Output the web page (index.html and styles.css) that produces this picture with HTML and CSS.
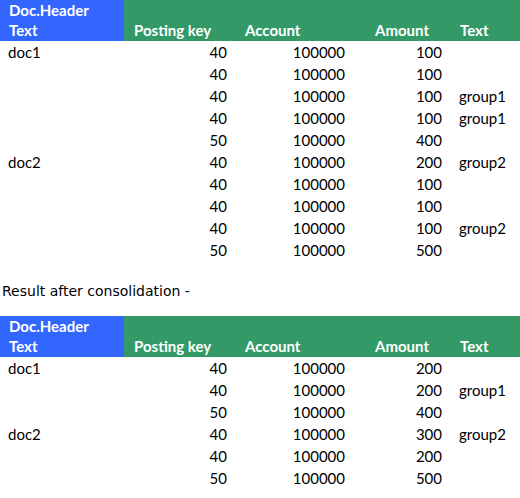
FILE: index.html
```html
<!DOCTYPE html>
<html>
<head>
<meta charset="utf-8">
<link rel="stylesheet" href="styles.css">
</head>
<body>
<div class="sheet">
  <div class="grid">
    <div class="h h1">Doc.Header<br>Text</div>
    <div class="h h2">Posting key</div>
    <div class="h h3">Account</div>
    <div class="h h4">Amount</div>
    <div class="h h5">Text</div>

    <div class="c l">doc1</div><div class="c r">40</div><div class="c r">100000</div><div class="c r">100</div><div class="c l t"></div>
    <div class="c l"></div><div class="c r">40</div><div class="c r">100000</div><div class="c r">100</div><div class="c l t"></div>
    <div class="c l"></div><div class="c r">40</div><div class="c r">100000</div><div class="c r">100</div><div class="c l t">group1</div>
    <div class="c l"></div><div class="c r">40</div><div class="c r">100000</div><div class="c r">100</div><div class="c l t">group1</div>
    <div class="c l"></div><div class="c r">50</div><div class="c r">100000</div><div class="c r">400</div><div class="c l t"></div>
    <div class="c l">doc2</div><div class="c r">40</div><div class="c r">100000</div><div class="c r">200</div><div class="c l t">group2</div>
    <div class="c l"></div><div class="c r">40</div><div class="c r">100000</div><div class="c r">100</div><div class="c l t"></div>
    <div class="c l"></div><div class="c r">40</div><div class="c r">100000</div><div class="c r">100</div><div class="c l t"></div>
    <div class="c l"></div><div class="c r">40</div><div class="c r">100000</div><div class="c r">100</div><div class="c l t">group2</div>
    <div class="c l"></div><div class="c r">50</div><div class="c r">100000</div><div class="c r">500</div><div class="c l t"></div>
  </div>

  <p class="note">Result after consolidation -</p>

  <div class="grid">
    <div class="h h1">Doc.Header<br>Text</div>
    <div class="h h2">Posting key</div>
    <div class="h h3">Account</div>
    <div class="h h4">Amount</div>
    <div class="h h5">Text</div>

    <div class="c l">doc1</div><div class="c r">40</div><div class="c r">100000</div><div class="c r">200</div><div class="c l t"></div>
    <div class="c l"></div><div class="c r">40</div><div class="c r">100000</div><div class="c r">200</div><div class="c l t">group1</div>
    <div class="c l"></div><div class="c r">50</div><div class="c r">100000</div><div class="c r">400</div><div class="c l t"></div>
    <div class="c l">doc2</div><div class="c r">40</div><div class="c r">100000</div><div class="c r">300</div><div class="c l t">group2</div>
    <div class="c l"></div><div class="c r">40</div><div class="c r">100000</div><div class="c r">200</div><div class="c l t"></div>
    <div class="c l"></div><div class="c r">50</div><div class="c r">100000</div><div class="c r">500</div><div class="c l t"></div>
  </div>
</div>
</body>
</html>
```
FILE: styles.css
```css
html, body {
  margin: 0;
  padding: 0;
  background: #ffffff;
}
.sheet {
  width: 520px;
  font-family: Lato, "Liberation Sans", sans-serif;
  font-size: 15px;
  color: #000;
}
.grid {
  display: grid;
  grid-template-columns: 124px 108px 118px 97px 73px;
  grid-auto-rows: 22px;
  grid-template-rows: 41px;
}
.h {
  color: #fff;
  font-weight: bold;
  background: #339966;
  display: flex;
  align-items: flex-end;
  line-height: 20px;
  padding-bottom: 1px;
}
.h1 {
  background: #3366ff;
  padding-left: 9px;
  align-items: center;
  line-height: 20px;
}
.h2 { padding-left: 10px; }
.h3 { padding-left: 13px; }
.h4 { padding-left: 25px; }
.h5 { padding-left: 13px; }
.c {
  line-height: 22px;
  white-space: nowrap;
}
.l { padding-left: 8px; }
.r { text-align: right; padding-right: 5px; }
.t { padding-left: 12px; }
.note {
  margin: 0;
  height: 55px;
  line-height: 60px;
  padding-left: 2px;
  font-family: "DejaVu Sans", sans-serif;
  font-size: 14px;
}
```
